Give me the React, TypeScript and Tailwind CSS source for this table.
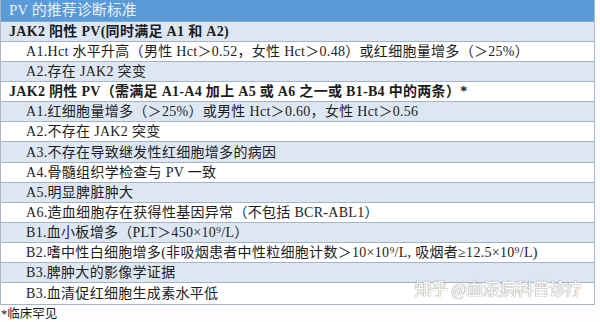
const rows: { text: string; group?: boolean; h: number }[] = [
  { text: 'JAK2 阳性 PV(同时满足 A1 和 A2)', group: true, h: 20 },
  { text: 'A1.Hct 水平升高（男性 Hct＞0.52，女性 Hct＞0.48）或红细胞量增多（＞25%）', h: 20 },
  { text: 'A2.存在 JAK2 突变', h: 20 },
  { text: 'JAK2 阴性 PV（需满足 A1-A4 加上 A5 或 A6 之一或 B1-B4 中的两条）*', group: true, h: 20 },
  { text: 'A1.红细胞量增多（＞25%）或男性 Hct＞0.60，女性 Hct＞0.56', h: 20 },
  { text: 'A2.不存在 JAK2 突变', h: 20 },
  { text: 'A3.不存在导致继发性红细胞增多的病因', h: 21 },
  { text: 'A4.骨髓组织学检查与 PV 一致', h: 20 },
  { text: 'A5.明显脾脏肿大', h: 20 },
  { text: 'A6.造血细胞存在获得性基因异常（不包括 BCR-ABL1）', h: 20 },
  { text: 'B1.血小板增多（PLT＞450×10⁹/L）', h: 20 },
  { text: 'B2.嗜中性白细胞增多(非吸烟患者中性粒细胞计数＞10×10⁹/L, 吸烟者≥12.5×10⁹/L)', h: 20 },
  { text: 'B3.脾肿大的影像学证据', h: 20 },
  { text: 'B3.血清促红细胞生成素水平低', h: 22 },
];

export default function App() {
  return (
    <div
      className="w-[600px] h-[322px] bg-[#fdfdfd] overflow-hidden text-[#1c1c1c]"
      style={{ fontFamily: '"Liberation Serif", "Noto Sans CJK SC", serif' }}
    >
      <div className="relative w-[595px] border-l border-r border-[#a9b7c8]">
        <div className="h-[22px] flex items-center pl-[8px] bg-[#5a9ad6] text-[#e9f1fa] text-[15px] border-b border-[#8ea6c2]">
          PV 的推荐诊断标准
        </div>
        {rows.map((r, i) => (
          <div
            key={i}
            style={{ height: r.h }}
            className={`flex items-center border-b border-[#a5b3c4] text-[14px] tracking-[0.3px] whitespace-nowrap ${
              i % 2 === 0 ? 'bg-[#dde7f3]' : 'bg-white'
            } ${r.group ? 'pl-[8px] font-semibold' : 'pl-[25px]'}`}
          >
            {r.text}
          </div>
        ))}
        <div
          className="absolute right-[12px] bottom-[3px] text-[17px] text-white tracking-[-0.5px]"
          style={{ textShadow: '0 0 1px #8f8f8f, 0 0 1px #8f8f8f' }}
        >
          知乎 @血液病科普诊疗
        </div>
      </div>
      <div className="pl-[1px] pt-[2px] text-[12.5px] leading-[14px]">*临床罕见</div>
    </div>
  );
}
